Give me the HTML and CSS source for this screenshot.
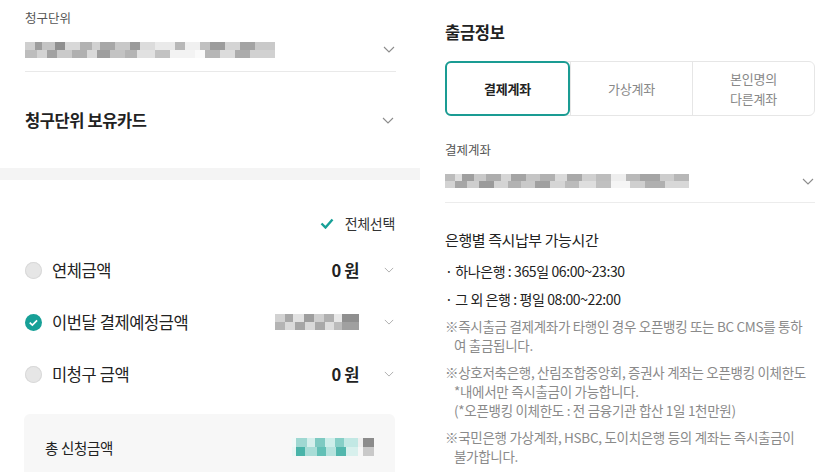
FILE: index.html
```html
<html>
    <head>
        <title>출금정보</title>
        <link rel="stylesheet" href="styles.css">
    </head>
    <body>
        <div class="panel panel-left">
            <div class="field">
                <div class="field-label">청구단위</div>
                <div class="select">
                    <div class="mosaic mosaic-unit"></div>
                    <svg class="chevron" viewBox="0 0 12 7"><path d="M1 1l5 5 5-5"/></svg>
                </div>
            </div>
            <div class="card-toggle">
                <span>청구단위 보유카드</span>
                <svg class="chevron" viewBox="0 0 12 7"><path d="M1 1l5 5 5-5"/></svg>
            </div>
            <div class="band"></div>
            <div class="amounts">
                <div class="select-all">
                    <svg class="check" viewBox="0 0 14 11"><path d="M1.5 5.5l4 4 7-8"/></svg>
                    <span>전체선택</span>
                </div>
                <div class="amount-row">
                    <span class="radio"></span>
                    <span class="amount-name">연체금액</span>
                    <span class="amount-value">0 원</span>
                    <svg class="chevron small" viewBox="0 0 12 7"><path d="M1 1l5 5 5-5"/></svg>
                </div>
                <div class="amount-row">
                    <span class="radio checked">
                        <svg viewBox="0 0 18 18"><path d="M5 9.2l2.8 2.6 5-5"/></svg>
                    </span>
                    <span class="amount-name">이번달 결제예정금액</span>
                    <span class="amount-value"><span class="mosaic mosaic-amount"></span></span>
                    <svg class="chevron small" viewBox="0 0 12 7"><path d="M1 1l5 5 5-5"/></svg>
                </div>
                <div class="amount-row">
                    <span class="radio"></span>
                    <span class="amount-name">미청구 금액</span>
                    <span class="amount-value">0 원</span>
                    <svg class="chevron small" viewBox="0 0 12 7"><path d="M1 1l5 5 5-5"/></svg>
                </div>
                <div class="total">
                    <span>총 신청금액</span>
                    <span class="mosaic mosaic-total"></span>
                </div>
            </div>
        </div>
        <div class="panel panel-right">
            <h2 class="title">출금정보</h2>
            <div class="tabs">
                <div class="tab active">결제계좌</div>
                <div class="tab">가상계좌</div>
                <div class="tab">본인명의<br>다른계좌</div>
            </div>
            <div class="field field-account">
                <div class="field-label">결제계좌</div>
                <div class="select">
                    <div class="mosaic mosaic-account"></div>
                    <svg class="chevron" viewBox="0 0 12 7"><path d="M1 1l5 5 5-5"/></svg>
                </div>
            </div>
            <div class="hours">
                <div class="hours-title">은행별 즉시납부 가능시간</div>
                <div class="hours-item">· 하나은행 : 365일 06:00~23:30</div>
                <div class="hours-item">· 그 외 은행 : 평일 08:00~22:00</div>
            </div>
            <div class="notes">
                <p>※즉시출금 결제계좌가 타행인 경우 오픈뱅킹 또는 BC CMS를 통하<br>여 출금됩니다.</p>
                <p>※상호저축은행, 산림조합중앙회, 증권사 계좌는 오픈뱅킹 이체한도<br>*내에서만 즉시출금이 가능합니다.<br>(*오픈뱅킹 이체한도 : 전 금융기관 합산 1일 1천만원)</p>
                <p>※국민은행 가상계좌, HSBC, 도이치은행 등의 계좌는 즉시출금이<br>불가합니다.</p>
            </div>
        </div>
    </body>
</html>
```

FILE: styles.css
```css
body {
    margin: 0;
    background-color: #fff;
    font-family: "Noto Sans CJK KR", "Noto Sans", sans-serif;
    color: #222;
    display: flex;
    width: 840px;
    height: 472px;
    overflow: hidden;
}
.panel {
    width: 420px;
    flex: none;
}
.field {
    padding: 8px 24px 0 25px;
}
.field-label {
    font-size: 12.5px;
    line-height: 20px;
    color: #555;
}
.select {
    display: flex;
    align-items: center;
    justify-content: space-between;
    height: 43px;
    border-bottom: 1px solid #e9e9e9;
}
.chevron {
    width: 12px;
    height: 7px;
    margin-right: 1px;
    fill: none;
    stroke: #8c8c8c;
    stroke-width: 1.1;
}
.chevron.small {
    width: 10px;
    height: 6px;
    stroke: #aaa;
}
.card-toggle {
    display: flex;
    align-items: center;
    justify-content: space-between;
    height: 96px;
    padding: 0 25px;
    font-size: 16.5px;
    font-weight: bold;
    letter-spacing: -0.4px;
}
.band {
    height: 12px;
    background-color: #f4f4f4;
}
.amounts {
    padding: 30px 25px 0 24px;
}
.select-all {
    display: flex;
    align-items: center;
    justify-content: flex-end;
    height: 26px;
    font-size: 14px;
    letter-spacing: -0.3px;
    color: #333;
    gap: 11px;
}
.check {
    width: 14px;
    height: 11px;
    fill: none;
    stroke: #17a097;
    stroke-width: 2.4;
}
.amount-row {
    display: flex;
    align-items: center;
    height: 52px;
    font-size: 16.5px;
    letter-spacing: -0.4px;
}
.amount-row:nth-child(2) {
    margin-top: 8px;
}
.radio {
    width: 17px;
    height: 17px;
    margin-left: 1px;
    border-radius: 50%;
    background-color: #e6e6e6;
    box-shadow: inset 0 0 0 1px #d9d9d9;
    flex: none;
}
.radio.checked {
    background-color: #17a097;
    box-shadow: none;
}
.radio svg {
    width: 17px;
    height: 17px;
    fill: none;
    stroke: #fff;
    stroke-width: 1.8;
}
.amount-name {
    margin-left: 10px;
    flex: 1;
}
.amount-value {
    font-weight: bold;
    margin-right: 25px;
    display: flex;
}
.total {
    display: flex;
    align-items: center;
    justify-content: space-between;
    margin-top: 14px;
    height: 66px;
    padding: 0 21px;
    background-color: #f7f7f7;
    border-radius: 6px 6px 0 0;
    font-size: 14.5px;
    letter-spacing: -0.3px;
}
.mosaic {
    display: block;
    background-repeat: no-repeat;
    background-size: 100% 50%;
    background-position: left top, left bottom;
}
.mosaic-unit {
    width: 250px;
    height: 16px;
    background-image:
        linear-gradient(90deg, #cfcfcf 0 4%, #9d9d9d 4% 7%, #c4c4c4 7% 12%, #8f8f8f 12% 16%, #d8d8d8 16% 22%, #b2b2b2 22% 27%, #d1d1d1 27% 30%, #a7a7a7 30% 36%, #c8c8c8 36% 42%, #9a9a9a 42% 46%, #dcdcdc 46% 52%, #eaeaea 52% 60%, #b8b8b8 60% 64%, #f0f0f0 64% 70%, #c0c0c0 70% 74%, #9c9c9c 74% 80%, #d4d4d4 80% 86%, #a3a3a3 86% 92%, #c9c9c9 92% 100%),
        linear-gradient(90deg, #bdbdbd 0 5%, #d3d3d3 5% 9%, #a2a2a2 9% 13%, #cacaca 13% 19%, #b0b0b0 19% 25%, #d9d9d9 25% 29%, #9e9e9e 29% 34%, #c3c3c3 34% 40%, #b4b4b4 40% 45%, #e1e1e1 45% 52%, #c2c2c2 52% 58%, #f3f3f3 58% 68%, #fafafa 68% 72%, #b6b6b6 72% 78%, #dcdcdc 78% 84%, #acacac 84% 90%, #d1d1d1 90% 100%);
}
.mosaic-amount {
    width: 84px;
    height: 16px;
    background-image:
        linear-gradient(90deg, #d2d2d2 0 12%, #a8a8a8 12% 22%, #e2e2e2 22% 34%, #9e9e9e 34% 46%, #cfcfcf 46% 58%, #b0b0b0 58% 70%, #e8e8e8 70% 80%, #8f8f8f 80% 100%),
        linear-gradient(90deg, #b4b4b4 0 12%, #dadada 12% 24%, #a6a6a6 24% 36%, #d9d9d9 36% 48%, #a9a9a9 48% 60%, #dedede 60% 70%, #bcbcbc 70% 80%, #a0a0a0 80% 100%);
}
.mosaic-total {
    width: 82px;
    height: 18px;
    background-image:
        linear-gradient(90deg, #f0f9f8 0 5%, #9fd8d2 5% 18%, #d5efec 18% 28%, #7ecac2 28% 40%, #cdeeea 40% 52%, #86cfc7 52% 64%, #c2e8e4 64% 80%, #efefef 80% 86%, #8c8c8c 86% 100%),
        linear-gradient(90deg, #e8f6f4 0 5%, #49b4a9 5% 16%, #a8ddd7 16% 30%, #62c0b6 30% 42%, #b6e3de 42% 54%, #52b7ad 54% 66%, #d8f0ed 66% 80%, #f6f6f6 80% 86%, #c9c9c9 86% 100%);
}
.panel-right {
    padding: 0 25px;
    box-sizing: border-box;
}
.title {
    margin: 0;
    padding-top: 20px;
    font-size: 16.5px;
    line-height: 24px;
    letter-spacing: -0.3px;
}
.tabs {
    display: flex;
    margin-top: 17px;
    height: 55px;
    border: 1px solid #e6e6e6;
    border-radius: 6px;
    box-sizing: border-box;
}
.tab {
    flex: 1;
    display: flex;
    align-items: center;
    justify-content: center;
    text-align: center;
    font-size: 13px;
    line-height: 20px;
    letter-spacing: -0.2px;
    color: #888;
    border-left: 1px solid #e6e6e6;
}
.tab:first-child {
    border-left: none;
}
.tab.active {
    margin: -1px 0 -1px -1px;
    border: 2px solid #1a9c93;
    border-radius: 6px;
    color: #222;
    font-weight: bold;
}
.field-account {
    padding: 24px 0 0 0;
}
.field-account .select {
    height: 42px;
    border-bottom-color: #ececec;
}
.mosaic-account {
    width: 244px;
    height: 14px;
    background-image:
        linear-gradient(90deg, #bcbcbc 0 4%, #dedede 4% 7%, #9f9f9f 7% 12%, #c9c9c9 12% 17%, #adadad 17% 23%, #d6d6d6 23% 27%, #a4a4a4 27% 33%, #c5c5c5 33% 39%, #b1b1b1 39% 45%, #dadada 45% 50%, #a9a9a9 50% 56%, #d0d0d0 56% 62%, #bdbdbd 62% 68%, #eeeeee 68% 74%, #b9b9b9 74% 80%, #a5a5a5 80% 88%, #cdcdcd 88% 94%, #b7b7b7 94% 100%),
        linear-gradient(90deg, #d3d3d3 0 4%, #a6a6a6 4% 9%, #cecece 9% 14%, #9b9b9b 14% 20%, #d4d4d4 20% 26%, #b2b2b2 26% 31%, #c9c9c9 31% 37%, #a0a0a0 37% 43%, #d5d5d5 43% 49%, #bbbbbb 49% 55%, #dedede 55% 62%, #c0c0c0 62% 68%, #f5f5f5 68% 76%, #cfcfcf 76% 82%, #b0b0b0 82% 90%, #d8d8d8 90% 100%);
}
.hours {
    padding-top: 24px;
}
.hours-title {
    font-size: 15px;
    line-height: 26px;
    letter-spacing: -0.4px;
    margin-bottom: 4px;
}
.hours-item {
    font-size: 14px;
    line-height: 28px;
    letter-spacing: -0.4px;
    color: #222;
}
.notes {
    padding-top: 4px;
}
.notes p {
    margin: 0 0 8px 0;
    padding-left: 9px;
    text-indent: -9px;
    font-size: 13.5px;
    line-height: 19px;
    letter-spacing: -0.3px;
    color: #8a8a8a;
    white-space: nowrap;
}
```
